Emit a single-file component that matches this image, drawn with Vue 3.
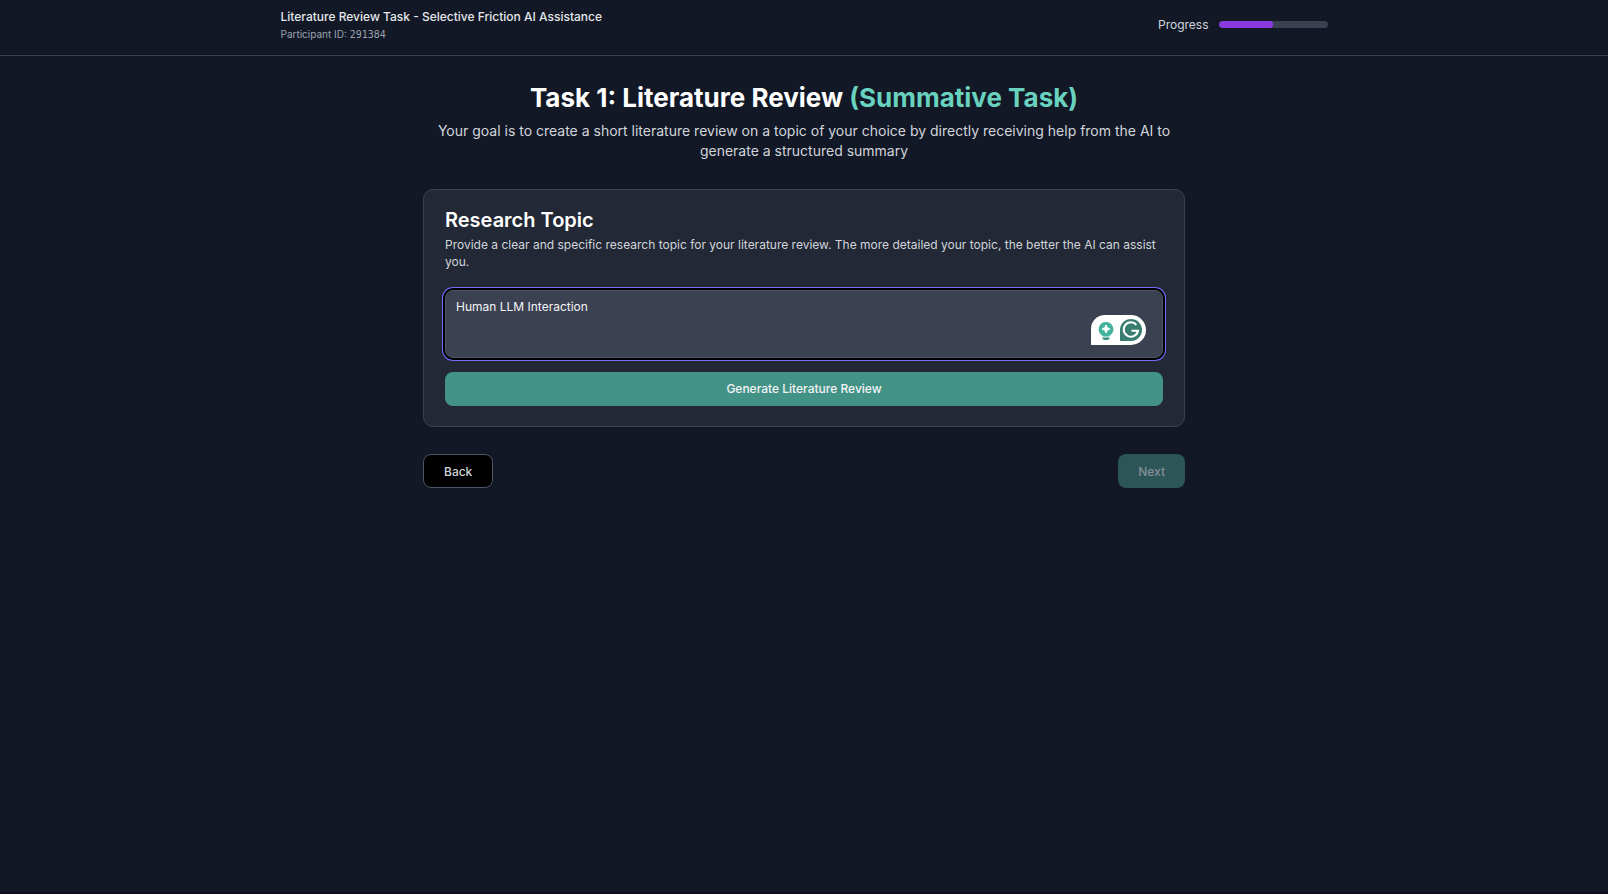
<script setup>
import { ref } from 'vue'

const topic = ref('Human LLM Interaction')
const progress = ref(50)
</script>

<template>
  <div class="page">
    <header class="topbar">
      <div class="topbar-inner">
        <div>
          <p class="study">Literature Review Task - Selective Friction AI Assistance</p>
          <p class="participant">Participant ID: <span class="mono">291384</span></p>
        </div>
        <div class="progress">
          <span id="progress-label">Progress</span>
          <div class="track" role="progressbar" aria-labelledby="progress-label" :aria-valuenow="progress">
            <div class="fill" :style="{ width: progress + '%' }"></div>
          </div>
        </div>
      </div>
    </header>

    <main class="content">
      <div class="intro">
        <h1>Task 1: Literature Review <span>(Summative Task)</span></h1>
        <p>Your goal is to create a short literature review on a topic of your choice by directly receiving help from the AI to generate a structured summary</p>
      </div>

      <section class="card">
        <h2><label for="topic">Research Topic</label></h2>
        <p id="topic-help" class="help">Provide a clear and specific research topic for your literature review. The more detailed your topic, the better the AI can assist you.</p>
        <div class="field">
          <textarea id="topic" v-model="topic" aria-describedby="topic-help" spellcheck="false"></textarea>
          <div class="assistant">
            <svg width="55" height="30" viewBox="0 0 55 30" aria-hidden="true">
              <path d="M0 30V14A14 14 0 0 1 14 0H40a15 15 0 0 1 0 30Z" fill="#fff" />
              <path d="M15 7a7.3 7.3 0 0 0-4.6 13c.8.7 1.3 1 1.6 1.500h6c.3-.5.8-.8 1.600-1.500A7.300 7.300 0 0 0 15 7Z" fill="#45b29d" />
              <path d="M15 10q.6 3.400 4 4-3.400.6-4 4-.6-3.400-4-4 3.400-.6 4-4Z" fill="#fff" stroke="#fff" stroke-width="1" />
              <path d="M11 22.500h8q-.8 2.500-3 2.500h-2q-2.200 0-3-2.500Z" fill="#37907f" />
              <path d="M29 26V15a11 11 0 1 1 11 11Z" fill="#397d70" />
              <path d="M45.500 10A7.200 7.200 0 1 0 47 15.800H40.500" fill="none" stroke="#fff" stroke-width="2" />
              <path d="M46.300 7.500v4.200h-4.200" fill="none" stroke="#397d70" stroke-width="1" />
            </svg>
          </div>
        </div>
        <button class="btn generate" type="button">Generate Literature Review</button>
      </section>

      <nav class="actions">
        <button class="btn back" type="button">Back</button>
        <button class="btn next" type="button" disabled>Next</button>
      </nav>
    </main>
  </div>
</template>

<style>
body {
  background: #121826;
}
</style>

<style scoped>
.page {
  min-height: 100vh;
  box-sizing: border-box;
  background: #121826;
  border-bottom: 2px solid #0a0d18;
  color: #d1d5db;
  font-family: Inter, "Liberation Sans", sans-serif;
  font-size: 12px;
  line-height: 17px;
}

h1,
h2,
p {
  margin: 0;
}

.topbar {
  border-bottom: 1px solid #3b4150;
}

.topbar-inner {
  display: flex;
  justify-content: space-between;
  max-width: 1047px;
  margin: 0 auto;
  padding: 8px 14px 12px;
}

.study {
  color: #e5e7eb;
  font-weight: 500;
}

.participant {
  margin-top: 1px;
  color: #9ca3af;
  font-size: 10px;
}

.mono {
  font-family: "DejaVu Sans Mono", monospace;
}

.progress {
  display: flex;
  align-items: center;
  gap: 10px;
  height: 33px;
}

.track {
  width: 109px;
  height: 7px;
  overflow: hidden;
  border-radius: 4px;
  background: #3b4150;
}

.fill {
  height: 100%;
  border-radius: 4px;
  background: #883adf;
}

.content {
  max-width: 762px;
  margin: 0 auto;
  padding: 25px 14px;
}

.intro {
  margin-bottom: 28px;
  text-align: center;
}

h1 {
  margin-bottom: 6px;
  color: #fff;
  font-size: 26px;
  font-weight: 700;
  line-height: 34px;
}

h1 span {
  color: #68d2bf;
}

.intro p {
  padding: 0 14px;
  font-size: 14px;
  line-height: 20px;
}

.card {
  padding: 19px 21px 20px;
  border: 1px solid #3b4150;
  border-radius: 10px;
  background: #222835;
}

h2 {
  margin-bottom: 5px;
  color: #fff;
  font-size: 20px;
  font-weight: 600;
  line-height: 22px;
}

.field {
  position: relative;
  display: flex;
  margin: 20px 0 14px;
}

textarea {
  width: 100%;
  height: 68px;
  box-sizing: border-box;
  padding: 7px 10px;
  border: 1px solid #4b5563;
  border-radius: 8px;
  outline: none;
  background: #3b4150;
  box-shadow: 0 0 0 2px #000, 0 0 0 3px #7a6bff;
  color: #f3f4f6;
  font: inherit;
  resize: none;
}

.assistant {
  position: absolute;
  right: 17px;
  bottom: 13px;
  height: 30px;
}

.btn {
  height: 34px;
  padding: 0 20px;
  border: 0;
  border-radius: 8px;
  font: inherit;
  font-weight: 500;
}

.generate {
  display: block;
  width: 100%;
  padding-bottom: 2px;
  background: #439286;
  color: #f3f4f6;
}

.actions {
  display: flex;
  justify-content: space-between;
  margin-top: 27px;
}

.back {
  border: 1px solid #4b5563;
  background: #000;
  color: #d1d5db;
}

.next {
  background: #2b5557;
  color: #868e97;
}
</style>
